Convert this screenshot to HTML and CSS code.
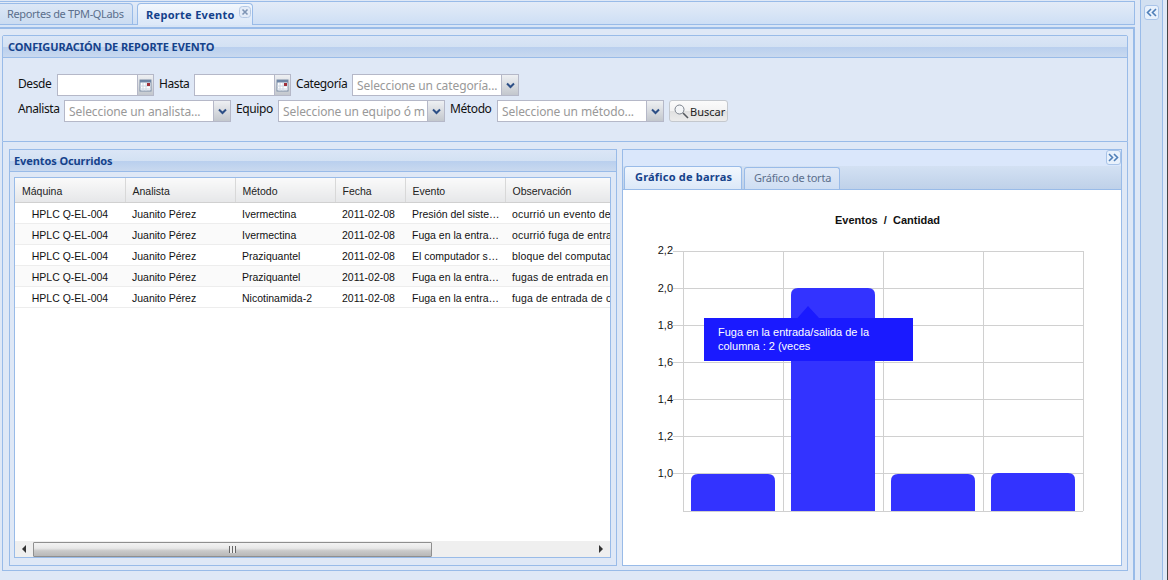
FILE: index.html
```html
<!DOCTYPE html>
<html lang="es">
<head>
    <meta charset="UTF-8">
    <title>Reporte Evento</title>
    <link rel="stylesheet" href="styles.css">
</head>
<body>
<div class="app">
    <div class="center">
        <div class="tab-strip">
            <div class="tab">Reportes de TPM-QLabs</div>
            <div class="tab tab-active">Reporte Evento
                <svg class="tab-close" width="12" height="12" viewBox="0 0 12 12"><rect x="0.5" y="0.5" width="11" height="11" rx="3" fill="#e4ecf8" stroke="#b4c8e4"/><path d="M3.500 3.500l5 5M8.500 3.500l-5 5" stroke="#7f95b5" stroke-width="1.600"/></svg>
            </div>
        </div>
        <div class="strip-spacer"></div>
        <div class="main">
            <div class="panel config">
                <div class="panel-head">CONFIGURACIÓN DE REPORTE EVENTO</div>
                <div class="config-body">
                    <div class="form-row">
                        <label class="lbl lbl-desde">Desde</label>
                        <div class="field date"><div class="input"></div><div class="trigger"><svg width="13" height="13" viewBox="0 0 13 13"><rect x="1" y="1" width="11" height="11" fill="#fff" stroke="#7d8ea6"/><rect x="1" y="1" width="11" height="2.500" fill="#6f86a6"/><path d="M4 4v8M7 4v8M1 7h11M1 10h11" stroke="#ccd6e4"/><rect x="8" y="4" width="3" height="3" fill="#a0303a"/></svg></div></div>
                        <label class="lbl lbl-hasta">Hasta</label>
                        <div class="field date"><div class="input"></div><div class="trigger"><svg width="13" height="13" viewBox="0 0 13 13"><rect x="1" y="1" width="11" height="11" fill="#fff" stroke="#7d8ea6"/><rect x="1" y="1" width="11" height="2.500" fill="#6f86a6"/><path d="M4 4v8M7 4v8M1 7h11M1 10h11" stroke="#ccd6e4"/><rect x="8" y="4" width="3" height="3" fill="#a0303a"/></svg></div></div>
                        <label class="lbl lbl-cat">Categoría</label>
                        <div class="field combo"><div class="input">Seleccione un categoría...</div><div class="trigger"><svg width="11" height="7" viewBox="0 0 11 7"><path d="M2 1.500l3.500 3.500 3.500-3.500" fill="none" stroke="#2d4f86" stroke-width="2"/></svg></div></div>
                    </div>
                    <div class="form-row">
                        <label class="lbl lbl-ana">Analista</label>
                        <div class="field combo"><div class="input">Seleccione un analista...</div><div class="trigger"><svg width="11" height="7" viewBox="0 0 11 7"><path d="M2 1.500l3.500 3.500 3.500-3.500" fill="none" stroke="#2d4f86" stroke-width="2"/></svg></div></div>
                        <label class="lbl lbl-equipo">Equipo</label>
                        <div class="field combo"><div class="input">Seleccione un equipo ó m</div><div class="trigger"><svg width="11" height="7" viewBox="0 0 11 7"><path d="M2 1.500l3.500 3.500 3.500-3.500" fill="none" stroke="#2d4f86" stroke-width="2"/></svg></div></div>
                        <label class="lbl lbl-met">Método</label>
                        <div class="field combo"><div class="input">Seleccione un método...</div><div class="trigger"><svg width="11" height="7" viewBox="0 0 11 7"><path d="M2 1.500l3.500 3.500 3.500-3.500" fill="none" stroke="#2d4f86" stroke-width="2"/></svg></div></div>
                        <button class="btn" type="button"><svg width="16" height="16" viewBox="0 0 16 16"><circle cx="6.500" cy="6.500" r="4.500" fill="#f4f6f8" stroke="#7b828c"/><path d="M10 10l5 5" stroke="#55595f" stroke-width="1.600"/></svg>Buscar</button>
                    </div>
                </div>
            </div>
            <div class="lower">
                <div class="panel events">
                    <div class="panel-head">Eventos Ocurridos</div>
                    <div class="events-body">
                        <div class="grid">
                            <div class="grid-view">
                                <table>
                                    <colgroup><col class="c1"><col class="c2"><col class="c3"><col class="c4"><col class="c5"><col class="c6"></colgroup>
                                    <thead>
                                        <tr><th>Máquina</th><th>Analista</th><th>Método</th><th>Fecha</th><th>Evento</th><th>Observación</th></tr>
                                    </thead>
                                    <tbody>
                                        <tr><td class="center-cell">HPLC Q-EL-004</td><td>Juanito Pérez</td><td>Ivermectina</td><td>2011-02-08</td><td>Presión del sistema alta</td><td>ocurrió un evento de presión en el sistema</td></tr>
                                        <tr><td class="center-cell">HPLC Q-EL-004</td><td>Juanito Pérez</td><td>Ivermectina</td><td>2011-02-08</td><td>Fuga en la entrada/salida de la columna</td><td>ocurrió fuga de entrada en la columna</td></tr>
                                        <tr><td class="center-cell">HPLC Q-EL-004</td><td>Juanito Pérez</td><td>Praziquantel</td><td>2011-02-08</td><td>El computador se bloqueó</td><td>bloque del computador durante la corrida</td></tr>
                                        <tr><td class="center-cell">HPLC Q-EL-004</td><td>Juanito Pérez</td><td>Praziquantel</td><td>2011-02-08</td><td>Fuga en la entrada/salida de la columna</td><td>fugas de entrada en la columna</td></tr>
                                        <tr><td class="center-cell">HPLC Q-EL-004</td><td>Juanito Pérez</td><td>Nicotinamida-2</td><td>2011-02-08</td><td>Fuga en la entrada/salida de la columna</td><td>fuga de entrada de columna</td></tr>
                                    </tbody>
                                </table>
                            </div>
                            <div class="scrollbar">
                                <div class="sb-btn"><span class="arrow-left"></span></div>
                                <div class="sb-track"><div class="sb-thumb"><span class="grip"></span></div></div>
                                <div class="sb-btn"><span class="arrow-right"></span></div>
                            </div>
                        </div>
                    </div>
                </div>
                <div class="panel charts">
                    <div class="charts-top">
                        <div class="tool-btn"><svg width="11" height="9" viewBox="0 0 11 9"><path d="M1 1l3.500 3.500L1 8M6 1l3.500 3.500L6 8" fill="none" stroke="#4f7fb8" stroke-width="1.600"/></svg></div>
                    </div>
                    <div class="charts-tabs">
                        <div class="ctab ctab-active">Gráfico de barras</div>
                        <div class="ctab">Gráfico de torta</div>
                    </div>
                    <div class="chart-body">
                        <svg class="chart" width="498" height="375" viewBox="623 190 498 375">
                            <text class="chart-title" x="887.500" y="224" text-anchor="middle" xml:space="preserve">Eventos  /  Cantidad</text>
                            <g class="gridlines">
                                <path d="M673 251.500H1083M673 288.500H1083M673 325.500H1083M673 362.500H1083M673 399.500H1083M673 436.500H1083M673 473.500H1083M683 511.500H1083"/>
                                <path d="M683.500 251V511M783.500 251V511M883.500 251V511M983.500 251V511M1083.500 251V511"/>
                            </g>
                            <g class="ticks" text-anchor="end">
                                <text x="673" y="254">2,2</text>
                                <text x="673" y="292">2,0</text>
                                <text x="673" y="329">1,8</text>
                                <text x="673" y="366">1,6</text>
                                <text x="673" y="403">1,4</text>
                                <text x="673" y="440">1,2</text>
                                <text x="673" y="477">1,0</text>
                            </g>
                            <g class="bars">
                                <path d="M691 511V481Q691 474 698 474H768Q775 474 775 481V511Z"/>
                                <path d="M791 511V295Q791 288 798 288H868Q875 288 875 295V511Z"/>
                                <path d="M891 511V481Q891 474 898 474H968Q975 474 975 481V511Z"/>
                                <path d="M991 511V480Q991 473 998 473H1068Q1075 473 1075 480V511Z"/>
                            </g>
                            <path class="tip" d="M704 318H797.500L808 306L819 318H913V361H704Z"/>
                            <text class="tip-text" x="718" y="336">Fuga en la entrada/salida de la</text>
                            <text class="tip-text" x="718" y="350">columna : 2 (veces</text>
                        </svg>
                    </div>
                </div>
            </div>
        </div>
    </div>
    <div class="east">
        <div class="tool-btn"><svg width="11" height="9" viewBox="0 0 11 9"><path d="M5 1L1.500 4.500 5 8M10 1L6.500 4.500 10 8" fill="none" stroke="#4f7fb8" stroke-width="1.600"/></svg></div>
    </div>
</div>
</body>
</html>
```

FILE: styles.css
```css
html, body {
    margin: 0;
    padding: 0;
    overflow: hidden;
}
body {
    font-family: "Noto Sans", Arial, sans-serif;
    font-size: 11px;
    background-color: #dfe8f6;
}
.app {
    display: flex;
    width: 1168px;
    height: 580px;
    box-sizing: border-box;
    border-right: 1px solid #444;
    background-color: #dfe8f6;
}
.center {
    width: 1135px;
    display: flex;
    flex-direction: column;
}

/* top tabs */
.tab-strip {
    height: 24px;
    margin-top: 1px;
    display: flex;
    align-items: flex-end;
    box-sizing: border-box;
    gap: 4px;
    border-top: 1px solid #99bbe8;
    border-right: 1px solid #99bbe8;
    border-bottom: 1px solid #99bbe8;
    background: linear-gradient(#e3ebf7, #cedff5);
}
.tab {
    height: 22px;
    width: 133px;
    margin-bottom: -1px;
    box-sizing: border-box;
    padding-left: 7px;
    line-height: 20px;
    letter-spacing: -0.35px;
    color: #5b6f8c;
    border: 1px solid #99bbe8;
    border-left: 0;
    border-radius: 0 4px 0 0;
    background: linear-gradient(#dce7f6, #cbdcf1);
}
.tab-active {
    width: 116px;
    padding-left: 8px;
    line-height: 21px;
    letter-spacing: 0.3px;
    position: relative;
    font-weight: bold;
    color: #15428b;
    border-left: 1px solid #99bbe8;
    border-bottom: 0;
    border-radius: 4px 4px 0 0;
    background: linear-gradient(#f2f7fd, #dce8f8);
}
.tab-close {
    position: absolute;
    right: 1px;
    top: 2px;
}
.strip-spacer {
    height: 2px;
    background-color: #d8e5f6;
}
.main {
    flex: 1;
    border-top: 2px solid #99bbe8;
    border-right: 2px solid #99bbe8;
    padding: 6px 5px 0 2px;
    background-color: #dfe8f6;
}

/* panels */
.panel {
    box-sizing: border-box;
    border: 1px solid #99bbe8;
}
.panel-head {
    height: 22px;
    box-sizing: border-box;
    padding-left: 5px;
    line-height: 22px;
    letter-spacing: -0.1px;
    font-weight: bold;
    color: #15428b;
    border-bottom: 1px solid #99bbe8;
    background: linear-gradient(#dbe6f6 0, #d3e1f3 52%, #b9cfee 52%, #c9d9ef 100%);
}
.events .panel-head {
    padding-left: 4px;
}
.config {
    height: 107px;
    border-radius: 2px 2px 0 0;
}
.config-body {
    padding: 16px 0 0 15px;
}
.form-row {
    display: flex;
    height: 22px;
    margin-bottom: 4px;
    align-items: flex-start;
}
.lbl {
    font-size: 12px;
    line-height: 19px;
    letter-spacing: -0.4px;
    color: #111;
}
.lbl-desde { width: 39px; }
.lbl-hasta { width: 35px; margin-left: 5px; }
.lbl-cat { width: 56px; margin-left: 5px; }
.lbl-ana { width: 46px; line-height: 18px; }
.lbl-equipo { width: 42px; margin-left: 5px; line-height: 18px; }
.lbl-met { width: 47px; margin-left: 5px; line-height: 18px; }
.field {
    display: flex;
    height: 22px;
}
.input {
    box-sizing: border-box;
    height: 22px;
    padding-left: 4px;
    overflow: hidden;
    white-space: nowrap;
    font-size: 12px;
    line-height: 21px;
    letter-spacing: -0.1px;
    color: #999;
    background-color: #fff;
    border: 1px solid #b5b8c8;
    border-right: 0;
}
.date .input { width: 80px; }
.combo .input { width: 149px; }
.trigger {
    box-sizing: border-box;
    width: 18px;
    height: 22px;
    display: flex;
    align-items: center;
    justify-content: center;
    border: 1px solid #b5b8c8;
    background: linear-gradient(#eef0f3, #c3c7cd);
}
.date .trigger { width: 17px; }
.btn {
    box-sizing: border-box;
    width: 59px;
    height: 22px;
    margin-left: 5px;
    padding: 0 0 0 3px;
    display: flex;
    align-items: center;
    gap: 1px;
    font-family: inherit;
    font-size: 11px;
    color: #222;
    border: 1px solid #c4c8ce;
    border-radius: 3px;
    background: linear-gradient(#fbfbfb 0, #f3f3f3 50%, #e0e0e0 50%, #ececec 100%);
}
.lower {
    box-sizing: border-box;
    height: 429px;
    padding: 7px 5px 0 6px;
    display: flex;
    gap: 5px;
    border: 1px solid #99bbe8;
    border-top: 0;
}
.events {
    width: 608px;
    height: 417px;
}
.events-body {
    padding: 5px 5px 0 4px;
}
.grid {
    height: 381px;
    box-sizing: border-box;
    display: flex;
    flex-direction: column;
    border: 1px solid #99bbe8;
    background-color: #fff;
}
.grid-view {
    flex: 1;
    overflow: hidden;
}
table {
    width: 838px;
    table-layout: fixed;
    border-collapse: collapse;
    font-family: "Liberation Sans", Arial, sans-serif;
    font-size: 10.500px;
}
.c1 { width: 110px; }
.c2 { width: 110px; }
.c3 { width: 100px; }
.c4 { width: 70px; }
.c5 { width: 100px; }
.c6 { width: 348px; }
th {
    height: 24px;
    padding: 2px 5px 0 7px;
    box-sizing: border-box;
    text-align: left;
    font-weight: normal;
    color: #222;
    border-right: 1px solid #d8d8d8;
    border-bottom: 1px solid #d0d0d0;
    background: linear-gradient(#fafafa, #e6e7e9);
}
td {
    height: 21px;
    padding: 2px 5px 0 7px;
    box-sizing: border-box;
    overflow: hidden;
    white-space: nowrap;
    text-overflow: ellipsis;
    color: #111;
    border-bottom: 1px solid #ededed;
}
tbody tr:nth-child(even) td {
    background-color: #fafafa;
}
.center-cell {
    padding: 2px 6px 0;
    text-align: center;
}
td:last-child {
    text-overflow: clip;
    letter-spacing: 0.15px;
}

/* scrollbar */
.scrollbar {
    height: 16px;
    display: flex;
    background-color: #efefef;
}
.sb-btn {
    width: 18px;
    display: flex;
    align-items: center;
    justify-content: center;
}
.arrow-left, .arrow-right {
    width: 0;
    height: 0;
    border-top: 4px solid transparent;
    border-bottom: 4px solid transparent;
}
.arrow-left { border-right: 4px solid #333; }
.arrow-right { border-left: 4px solid #333; }
.sb-track {
    flex: 1;
    padding-top: 1px;
}
.sb-thumb {
    width: 399px;
    height: 15px;
    box-sizing: border-box;
    display: flex;
    align-items: center;
    justify-content: center;
    border: 1px solid #8f8f8f;
    border-radius: 1px;
    background: linear-gradient(#f3f3f3 0, #e8e8e8 40%, #c9c9c9 60%, #b8b8b8 100%);
}
.grip {
    width: 7px;
    height: 7px;
    background: repeating-linear-gradient(90deg, #666 0, #666 1px, #eee 1px, #eee 3px);
}

/* right panel */
.charts {
    width: 500px;
    height: 417px;
}
.charts-top {
    height: 16px;
    display: flex;
    justify-content: flex-end;
    background-color: #dae7fb;
}
.tool-btn {
    box-sizing: border-box;
    width: 15px;
    height: 15px;
    display: flex;
    align-items: center;
    justify-content: center;
    border: 1px solid #a9c4e8;
    border-radius: 3px;
    background-color: #e8f1fc;
}
.charts-tabs {
    height: 24px;
    box-sizing: border-box;
    padding-left: 1px;
    display: flex;
    align-items: flex-end;
    gap: 2px;
    border-bottom: 1px solid #99bbe8;
    background: linear-gradient(#d3e1f3, #bfd1e9);
}
.ctab {
    width: 96px;
    height: 22px;
    box-sizing: border-box;
    padding-left: 9px;
    line-height: 19px;
    letter-spacing: -0.25px;
    color: #5b6f8c;
    border: 1px solid #99bbe8;
    border-bottom: 0;
    border-radius: 3px 3px 0 0;
    background: linear-gradient(#dfe9f7, #cfdef3);
}
.ctab-active {
    width: 118px;
    height: 23px;
    padding-left: 10px;
    line-height: 20px;
    letter-spacing: 0.2px;
    font-weight: bold;
    color: #15428b;
    background: linear-gradient(#f2f7fd, #dce8f8);
}
.chart-body {
    height: 375px;
    background-color: #fff;
}
.chart {
    display: block;
    font-family: "Liberation Sans", Arial, sans-serif;
}
.chart-title {
    font-size: 11px;
    font-weight: bold;
    fill: #111;
}
.gridlines path {
    fill: none;
    stroke: #d0d0d0;
}
.ticks text {
    font-size: 11px;
    fill: #111;
}
.bars path {
    fill: #3333ff;
}
.tip {
    fill: #1a1aff;
}
.tip-text {
    font-size: 11px;
    fill: #fff;
}

/* collapsed east region */
.east {
    width: 23px;
    margin-left: 5px;
    padding: 5px 0 0 3px;
    box-sizing: border-box;
    border-left: 1px solid #99bbe8;
    border-right: 1px solid #99bbe8;
    background-color: #d2e0f1;
}
```
